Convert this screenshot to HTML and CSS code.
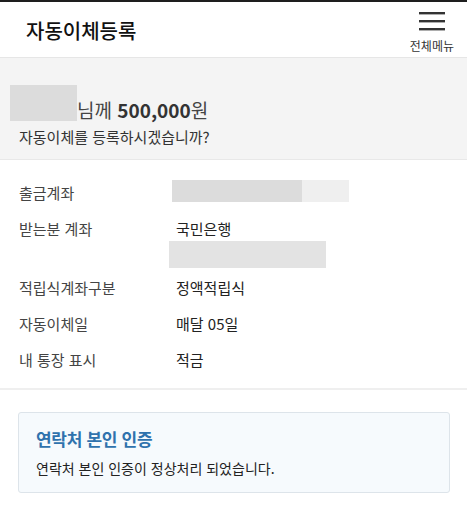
FILE: index.html
```html
<!DOCTYPE html>
<html lang="ko">
<head>
<meta charset="utf-8">
<title>자동이체등록</title>
<link rel="stylesheet" href="styles.css">
</head>
<body>
<header class="header">
  <h1 class="title">자동이체등록</h1>
  <button class="menu" type="button">
    <svg class="menu-icon" width="26" height="20" viewBox="0 0 26 20" aria-hidden="true">
      <rect x="0" y="1" width="26" height="2.4" fill="#333"/>
      <rect x="0" y="9" width="26" height="2.4" fill="#333"/>
      <rect x="0" y="17" width="26" height="2.4" fill="#333"/>
    </svg>
    <span class="menu-label">전체메뉴</span>
  </button>
</header>

<section class="summary">
  <div class="amount-line">
    <span class="blur blur-name"></span>
    <span class="amount-text">님께 <strong>500,000</strong>원</span>
  </div>
  <p class="question">자동이체를 등록하시겠습니까?</p>
</section>

<section class="details">
  <div class="label">출금계좌</div>
  <div class="value"><span class="blur blur-account"></span></div>

  <div class="label">받는분 계좌</div>
  <div class="value value-stack">
    <span>국민은행</span>
    <span class="blur blur-target"></span>
  </div>

  <div class="label">적립식계좌구분</div>
  <div class="value">정액적립식</div>

  <div class="label">자동이체일</div>
  <div class="value">매달 05일</div>

  <div class="label">내 통장 표시</div>
  <div class="value">적금</div>
</section>

<section class="notice-wrap">
  <div class="notice">
    <h2 class="notice-title">연락처 본인 인증</h2>
    <p class="notice-text">연락처 본인 인증이 정상처리 되었습니다.</p>
  </div>
</section>
</body>
</html>
```

FILE: styles.css
```css
* { box-sizing: border-box; }

html, body {
  margin: 0;
  padding: 0;
  background: #fff;
}

body {
  font-family: "Noto Sans CJK KR", "Noto Sans", sans-serif;
  color: #333;
  width: 467px;
}

.header {
  height: 58px;
  border-top: 2px solid #1e1e1e;
  border-bottom: 1px solid #e6e6e6;
  display: flex;
  justify-content: space-between;
  align-items: flex-start;
  padding: 0 13px 0 26px;
}

.title {
  margin: 17px 0 0;
  font-size: 20px;
  line-height: 24px;
  font-weight: 500;
  color: #111;
}

.menu {
  border: 0;
  background: none;
  padding: 0;
  margin-top: 9px;
  display: flex;
  flex-direction: column;
  align-items: center;
  font-family: inherit;
}

.menu-icon { display: block; }

.menu-label {
  margin-top: 8px;
  font-size: 12px;
  line-height: 14px;
  color: #333;
}

.summary {
  background: #f4f4f4;
  padding: 27px 0 12px 10px;
  border-bottom: 1px solid #e8e8e8;
}

.amount-line {
  display: flex;
  align-items: flex-end;
}

.blur {
  display: block;
  background: #dcdcdc;
}

.blur-name {
  width: 67px;
  height: 36px;
}

.amount-text {
  font-size: 19px;
  line-height: 22px;
  color: #444;
}

.amount-text strong {
  font-weight: 700;
  color: #333;
}

.question {
  margin: 6px 0 0 9px;
  font-size: 15px;
  line-height: 20px;
  color: #333;
}

.details {
  display: grid;
  grid-template-columns: 157px 1fr;
  row-gap: 16px;
  padding: 23px 0 18px 19px;
  border-bottom: 2px solid #efefef;
  font-size: 15px;
  line-height: 20px;
}

.label { color: #444; }
.value { color: #222; }

.value-stack {
  display: flex;
  flex-direction: column;
}

.blur-account {
  width: 177px;
  height: 22px;
  margin: -3px 0 0 -4px;
  background: linear-gradient(to right, #dcdcdc 0, #dcdcdc 130px, #efefef 130px);
}

.blur-target {
  width: 157px;
  height: 27px;
  margin: 2px 0 -6px -7px;
  background: #e3e3e3;
}

.notice-wrap {
  padding: 22px 17px 12px 18px;
}

.notice {
  background: #f6fafd;
  border: 1px solid #dde4ea;
  border-radius: 3px;
  padding: 15px 17px 15px 17px;
}

.notice-title {
  margin: 0;
  font-size: 17px;
  line-height: 22px;
  font-weight: 700;
  color: #2f72ad;
  letter-spacing: -0.3px;
}

.notice-text {
  margin: 9px 0 0;
  font-size: 14px;
  line-height: 18px;
  color: #222;
}
```
